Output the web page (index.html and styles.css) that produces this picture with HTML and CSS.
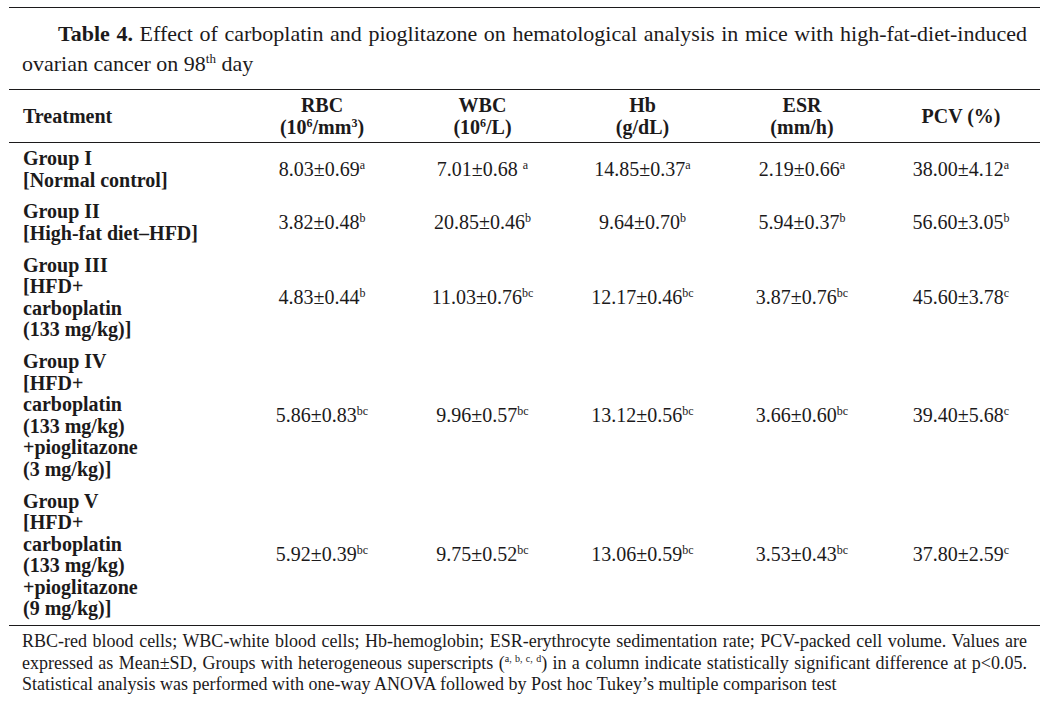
FILE: index.html
```html
<!DOCTYPE html>
<html lang="en">
<head>
<meta charset="utf-8">
<title>Table 4</title>
<link rel="stylesheet" href="styles.css">
</head>
<body>
<div class="page">
  <div class="top-rule"></div>
  <p class="caption"><b>Table 4.</b> Effect of carboplatin and pioglitazone on hematological analysis in mice with high-fat-diet-induced ovarian cancer on 98<sup>th</sup> day</p>
  <table class="data">
    <colgroup>
      <col class="c-treat">
      <col class="c-rbc">
      <col class="c-wbc">
      <col class="c-hb">
      <col class="c-esr">
      <col class="c-pcv">
    </colgroup>
    <thead>
      <tr>
        <th class="th-treat">Treatment</th>
        <th>RBC<br>(10<sup>6</sup>/mm<sup>3</sup>)</th>
        <th>WBC<br>(10<sup>6</sup>/L)</th>
        <th>Hb<br>(g/dL)</th>
        <th>ESR<br>(mm/h)</th>
        <th>PCV (%)</th>
      </tr>
    </thead>
    <tbody>
      <tr>
        <td class="grp">Group I<br>[Normal control]</td>
        <td>8.03±0.69<sup>a</sup></td>
        <td>7.01±0.68 <sup>a</sup></td>
        <td>14.85±0.37<sup>a</sup></td>
        <td>2.19±0.66<sup>a</sup></td>
        <td>38.00±4.12<sup>a</sup></td>
      </tr>
      <tr>
        <td class="grp">Group II<br>[High-fat diet–HFD]</td>
        <td>3.82±0.48<sup>b</sup></td>
        <td>20.85±0.46<sup>b</sup></td>
        <td>9.64±0.70<sup>b</sup></td>
        <td>5.94±0.37<sup>b</sup></td>
        <td>56.60±3.05<sup>b</sup></td>
      </tr>
      <tr>
        <td class="grp">Group III<br>[HFD+<br>carboplatin<br>(133 mg/kg)]</td>
        <td>4.83±0.44<sup>b</sup></td>
        <td>11.03±0.76<sup>bc</sup></td>
        <td>12.17±0.46<sup>bc</sup></td>
        <td>3.87±0.76<sup>bc</sup></td>
        <td>45.60±3.78<sup>c</sup></td>
      </tr>
      <tr>
        <td class="grp">Group IV<br>[HFD+<br>carboplatin<br>(133 mg/kg)<br>+pioglitazone<br>(3 mg/kg)]</td>
        <td>5.86±0.83<sup>bc</sup></td>
        <td>9.96±0.57<sup>bc</sup></td>
        <td>13.12±0.56<sup>bc</sup></td>
        <td>3.66±0.60<sup>bc</sup></td>
        <td>39.40±5.68<sup>c</sup></td>
      </tr>
      <tr>
        <td class="grp">Group V<br>[HFD+<br>carboplatin<br>(133 mg/kg)<br>+pioglitazone<br>(9 mg/kg)]</td>
        <td>5.92±0.39<sup>bc</sup></td>
        <td>9.75±0.52<sup>bc</sup></td>
        <td>13.06±0.59<sup>bc</sup></td>
        <td>3.53±0.43<sup>bc</sup></td>
        <td>37.80±2.59<sup>c</sup></td>
      </tr>
    </tbody>
  </table>
  <p class="note">RBC-red blood cells; WBC-white blood cells; Hb-hemoglobin; ESR-erythrocyte sedimentation rate; PCV-packed cell volume. Values are expressed as Mean±SD, Groups with heterogeneous superscripts (<sup>a, b, c, d</sup>) in a column indicate statistically significant difference at p&lt;0.05. Statistical analysis was performed with one-way ANOVA followed by Post hoc Tukey’s multiple comparison test</p>
</div>
</body>
</html>
```

FILE: styles.css
```css
html, body {
  margin: 0;
  padding: 0;
  background: #ffffff;
}

.page {
  width: 1048px;
  height: 702px;
  overflow: hidden;
  font-family: "Liberation Serif", "Times New Roman", serif;
  color: #1c1a1b;
}

.top-rule {
  margin: 7px 8px 0 9px;
  height: 1px;
  background: #1c1a1b;
}

.caption {
  margin: 11px 21px 0 22px;
  font-size: 22px;
  line-height: 30px;
  text-indent: 36px;
  text-align: justify;
}

.caption b {
  font-weight: bold;
}

.caption sup {
  font-size: 13px;
  line-height: 0;
  vertical-align: 8px;
}

.data {
  margin: 10px 0 0 9px;
  width: 1031px;
  table-layout: fixed;
  border-collapse: collapse;
  font-size: 20px;
  line-height: 21.6px;
}

.c-treat { width: 233px; }
.c-rbc { width: 160px; }
.c-wbc { width: 161px; }
.c-hb { width: 159px; }
.c-esr { width: 160px; }
.c-pcv { width: 158px; }

.data thead tr {
  border-top: 1px solid #1c1a1b;
  border-bottom: 1px solid #1c1a1b;
}

.data th {
  font-weight: bold;
  text-align: center;
  vertical-align: middle;
  padding: 5px 0 4px;
}

.data th.th-treat {
  text-align: left;
  padding-left: 14px;
}

.data td {
  text-align: center;
  vertical-align: middle;
  padding: 5px 0 5px;
}

.data td.grp {
  text-align: left;
  font-weight: bold;
  padding-left: 14px;
}

.data tbody tr:last-child {
  border-bottom: 1px solid #1c1a1b;
}

.data sup {
  font-size: 12px;
  line-height: 0;
  vertical-align: 7px;
}

.data th sup {
  font-size: 12px;
  vertical-align: 7px;
}

.note {
  margin: 5px 21px 0 22px;
  font-size: 18px;
  line-height: 21.6px;
  text-align: justify;
}

.note sup {
  font-size: 10px;
  line-height: 0;
  vertical-align: 7px;
}
```
